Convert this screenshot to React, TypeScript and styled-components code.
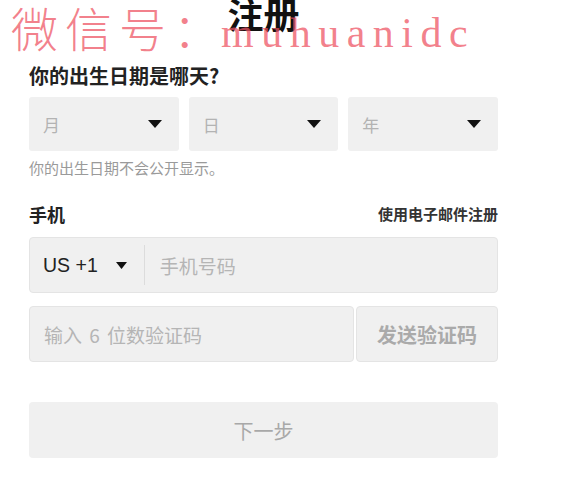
import React from "react";
import styled, { createGlobalStyle } from "styled-components";

const GlobalStyle = createGlobalStyle`
  html, body {
    margin: 0;
    padding: 0;
    background: #ffffff;
  }
  body {
    font-family: "Noto Sans CJK SC", "Noto Sans", sans-serif;
    color: #222;
  }
  * {
    box-sizing: border-box;
  }
`;

const Page = styled.div`
  position: relative;
  width: 561px;
  height: 486px;
  overflow: hidden;
  padding: 0 64px 0 29px;
`;

const Form = styled.div`
  display: flex;
  flex-direction: column;
  width: 469px;
`;

const Title = styled.h1`
  margin: -5px 0 0;
  font-size: 36px;
  line-height: 36px;
  font-weight: 700;
  color: #111;
  text-align: center;
`;

const Heading = styled.h2`
  margin: 33px 0 0;
  font-size: 20px;
  line-height: 24px;
  font-weight: 700;
  color: #222;
`;

const DateRow = styled.div`
  display: grid;
  grid-template-columns: repeat(3, 1fr);
  gap: 10px;
  margin-top: 9px;
`;

const Select = styled.div`
  height: 54px;
  display: flex;
  align-items: center;
  justify-content: space-between;
  padding: 0 17px 0 14px;
  background: #f0f0f0;
  border-radius: 3px;
  font-size: 17px;
  color: #b3b3b3;
`;

const Hint = styled.p`
  margin: 7px 0 0;
  font-size: 15px;
  line-height: 20px;
  color: #9a9a9a;
`;

const LabelRow = styled.div`
  display: flex;
  align-items: center;
  justify-content: space-between;
  margin-top: 25px;
  line-height: 22px;
`;

const Label = styled.span`
  font-size: 18px;
  font-weight: 700;
  color: #222;
`;

const SwitchLink = styled.a`
  font-size: 15px;
  font-weight: 700;
  color: #333;
  text-decoration: none;
  cursor: pointer;
`;

const Field = styled.div`
  height: 56px;
  display: flex;
  align-items: center;
  background: #f0f0f0;
  border: 1px solid #e4e4e4;
  border-radius: 4px;
`;

const PhoneField = styled(Field)`
  margin-top: 12px;
  padding-left: 13px;
`;

const Country = styled.div`
  display: flex;
  align-items: center;
  gap: 18px;
  padding-right: 17px;
  height: 40px;
  border-right: 1px solid #dcdcdc;
  font-family: "Liberation Sans", Arial, sans-serif;
  font-size: 19.5px;
  color: #222;
`;

const TextInput = styled.input<{ $pad?: number }>`
  flex: 1;
  min-width: 0;
  height: 100%;
  border: none;
  outline: none;
  background: transparent;
  padding: 0 0 0 ${(p) => p.$pad ?? 14}px;
  font-family: "Noto Sans CJK SC", "Noto Sans", sans-serif;
  font-size: 19px;
  word-spacing: 3px;
  color: #222;

  &::placeholder {
    color: #b5b5b5;
  }
`;

const CodeRow = styled.div`
  display: flex;
  gap: 2px;
  margin-top: 13px;
`;

const CodeField = styled(Field)`
  flex: 1;
`;

const SendButton = styled.button`
  width: 142px;
  height: 56px;
  border: 1px solid #e4e4e4;
  border-radius: 4px;
  background: #f0f0f0;
  font-family: "Noto Sans CJK SC", "Noto Sans", sans-serif;
  font-size: 20px;
  font-weight: 700;
  color: #aaaaaa;
  padding: 0;
`;

const NextButton = styled.button`
  margin-top: 40px;
  height: 56px;
  border: none;
  border-radius: 4px;
  background: #f0f0f0;
  font-family: "Noto Sans CJK SC", "Noto Sans", sans-serif;
  font-size: 20px;
  color: #a8a8a8;
  padding: 0;
`;

const Watermark = styled.div`
  position: absolute;
  left: 11px;
  top: -5px;
  pointer-events: none;
  white-space: nowrap;
  font-family: "Noto Sans CJK SC", sans-serif;
  font-weight: 300;
  font-size: 47px;
  line-height: 64px;
  letter-spacing: 7px;
  color: rgba(238, 80, 96, 0.72);
`;

const WatermarkLatin = styled.span`
  font-family: "Liberation Serif", serif;
  font-size: 42px;
  letter-spacing: 7.5px;
  margin-left: -6px;
`;

const Caret = ({ w = 14, h = 8 }: { w?: number; h?: number }) => (
  <svg width={w} height={h} viewBox={`0 0 ${w} ${h}`}>
    <path d={`M0 0H${w}L${w / 2} ${h}Z`} fill="#111" />
  </svg>
);

const dateParts = ["月", "日", "年"];

export default function App() {
  return (
    <Page>
      <GlobalStyle />
      <Form>
        <Title>注册</Title>
        <Heading>你的出生日期是哪天?</Heading>
        <DateRow>
          {dateParts.map((d) => (
            <Select key={d}>
              <span>{d}</span>
              <Caret />
            </Select>
          ))}
        </DateRow>
        <Hint>你的出生日期不会公开显示。</Hint>
        <LabelRow>
          <Label>手机</Label>
          <SwitchLink>使用电子邮件注册</SwitchLink>
        </LabelRow>
        <PhoneField>
          <Country>
            <span>US +1</span>
            <Caret w={11} h={7} />
          </Country>
          <TextInput $pad={15} placeholder="手机号码" />
        </PhoneField>
        <CodeRow>
          <CodeField>
            <TextInput placeholder="输入 6 位数验证码" />
          </CodeField>
          <SendButton type="button">发送验证码</SendButton>
        </CodeRow>
        <NextButton type="button">下一步</NextButton>
      </Form>
      <Watermark>
        微信号：<WatermarkLatin>muhuanidc</WatermarkLatin>
      </Watermark>
    </Page>
  );
}
